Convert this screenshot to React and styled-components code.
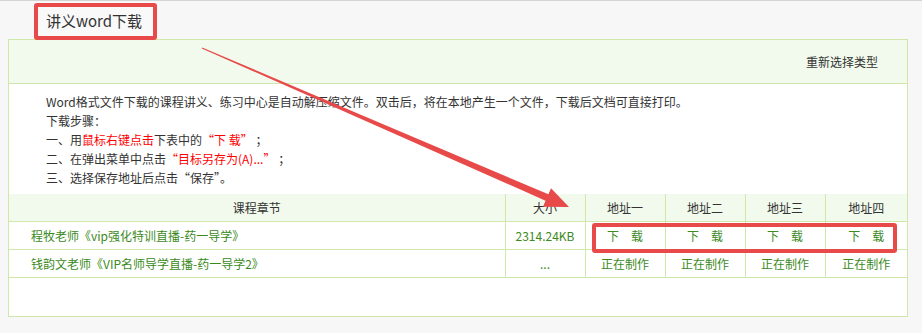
import styled, { createGlobalStyle } from "styled-components";

const GlobalStyle = createGlobalStyle`
  html, body {
    margin: 0;
    background: #f7f7f7;
  }
  body {
    font-family: "Noto Sans CJK SC", "Microsoft YaHei", sans-serif;
    color: #333;
  }
`;

const courses = [
  { name: "程牧老师《vip强化特训直播-药一导学》", size: "2314.24KB", ready: true },
  { name: "钱韵文老师《VIP名师导学直播-药一导学2》", size: "...", ready: false },
];

const addrs = ["地址一", "地址二", "地址三", "地址四"];
const colWidths = [496, 80, 80, 80, 80, 82];

function App() {
  return (
    <Page>
      <GlobalStyle />
      <Tab>讲义word下载</Tab>
      <Panel>
        <PanelHead>
          <HeadLink>重新选择类型</HeadLink>
        </PanelHead>
        <Intro>
          <p>Word格式文件下载的课程讲义、练习中心是自动解压缩文件。双击后，将在本地产生一个文件，下载后文档可直接打印。</p>
          <p>下载步骤：</p>
          <p>一、用<Red>鼠标右键点击</Red>下表中的<Red>“下 载”</Red> ；</p>
          <p>二、在弹出菜单中点击<Red>“目标另存为(A)...”</Red> ；</p>
          <p>三、选择保存地址后点击“保存”。</p>
        </Intro>
        <Table>
          <colgroup>
            {colWidths.map((w, i) => (
              <col key={i} style={{ width: w }} />
            ))}
          </colgroup>
          <thead>
            <tr>
              <Th>课程章节</Th>
              <Th>大小</Th>
              {addrs.map((a) => (
                <Th key={a}>{a}</Th>
              ))}
            </tr>
          </thead>
          <tbody>
            {courses.map((c) => (
              <tr key={c.name}>
                <Td $left>{c.name}</Td>
                <Td>{c.size}</Td>
                {addrs.map((a) => (
                  <Td key={a}>{c.ready ? "下　载" : "正在制作"}</Td>
                ))}
              </tr>
            ))}
          </tbody>
        </Table>
      </Panel>

      <Highlight />
      <Arrow width="922" height="333" viewBox="0 0 922 333">
        <polygon
          fill="#e84a4a"
          points="201.8,47.5 202.2,46.5 548.4,193.3 551,187.3 569,206 543,205.7 545.6,199.7"
        />
      </Arrow>
    </Page>
  );
}

const Page = styled.div`
  position: relative;
  height: 333px;
  box-sizing: border-box;
  border-top: 1px solid #d4d4d4;
  padding: 2px 14px 0 8px;
`;

const Tab = styled.div`
  position: relative;
  z-index: 1;
  margin-left: 26px;
  margin-bottom: -1px;
  width: 123px;
  height: 37px;
  box-sizing: border-box;
  border: 4px solid #e84a4a;
  border-radius: 3px;
  background: #f9f9f9;
  padding-left: 8px;
  font-size: 15px;
  line-height: 28px;
  color: #333;
`;

const Panel = styled.div`
  height: 278px;
  box-sizing: border-box;
  border: 1px solid #cfe7a9;
  background: #fff;
`;

const PanelHead = styled.div`
  height: 43px;
  background: #f1faec;
  border-bottom: 1px solid #cfe7a9;
  display: flex;
  justify-content: flex-end;
  align-items: center;
  padding-right: 29px;
`;

const HeadLink = styled.span`
  font-size: 12px;
  color: #333;
`;

const Intro = styled.div`
  padding: 8px 0 7px 37px;
  font-size: 12px;
  line-height: 19px;
  color: #333;

  p {
    margin: 0;
  }
`;

const Red = styled.span`
  color: #ff0000;
`;

const Table = styled.table`
  width: 100%;
  table-layout: fixed;
  border-collapse: collapse;
  font-size: 12px;
`;

const Th = styled.th`
  height: 27px;
  padding: 0;
  font-weight: normal;
  color: #333;
  background: #f1faec;
  border-left: 1px solid #cfe7a9;
  border-bottom: 1px solid #cfe7a9;

  &:first-child {
    border-left: none;
  }
`;

const Td = styled.td`
  height: 27px;
  padding: 0 0 0 ${({ $left }) => ($left ? "22px" : "0")};
  text-align: ${({ $left }) => ($left ? "left" : "center")};
  color: #3b8a1c;
  border-left: 1px solid #cfe7a9;
  border-bottom: 1px solid #cfe7a9;

  &:first-child {
    border-left: none;
  }
`;

const Highlight = styled.div`
  position: absolute;
  left: 592px;
  top: 222px;
  width: 305px;
  height: 30px;
  box-sizing: border-box;
  border: 4px solid #e84a4a;
  border-radius: 3px;
  pointer-events: none;
`;

const Arrow = styled.svg`
  position: absolute;
  left: 0;
  top: 0;
  pointer-events: none;
`;

export default App;
